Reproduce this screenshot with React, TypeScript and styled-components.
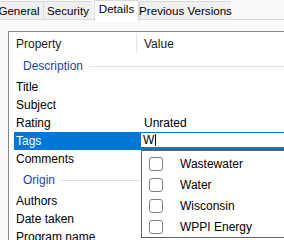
import React from "react";
import styled, { createGlobalStyle } from "styled-components";

const Global = createGlobalStyle`
  html, body { margin: 0; padding: 0; }
  body {
    width: 284px;
    height: 240px;
    overflow: hidden;
    background: #f9f9f9;
    font-family: "Liberation Sans", Arial, sans-serif;
    font-size: 12px;
    color: #000;
  }
`;

const Window = styled.div`
  position: relative;
  width: 284px;
  height: 240px;
  overflow: hidden;
`;

const TabStrip = styled.div`
  display: flex;
  align-items: flex-end;
  height: 19px;
  margin-left: -6px;
  background: #f9f9f9;
`;

const Tab = styled.div<{ $w: number; $active?: boolean }>`
  box-sizing: border-box;
  width: ${(p) => p.$w}px;
  height: ${(p) => (p.$active ? 21 : 18)}px;
  margin-left: ${(p) => (p.$active ? 2 : 0)}px;
  margin-bottom: ${(p) => (p.$active ? -2 : 0)}px;
  align-self: ${(p) => (p.$active ? "flex-start" : "flex-end")};
  display: flex;
  align-items: ${(p) => (p.$active ? "flex-start" : "center")};
  padding-top: ${(p) => (p.$active ? 1 : 0)}px;
  justify-content: center;
  background: ${(p) => (p.$active ? "#ffffff" : "#f0f0f0")};
  border: 1px solid #d9d9d9;
  border-bottom: none;
  border-right-width: ${(p) => (p.$active ? 1 : 0)}px;
  position: relative;
  z-index: ${(p) => (p.$active ? 2 : 1)};
  white-space: nowrap;
  font-size: 11.6px;
`;

const Panel = styled.div`
  position: relative;
  z-index: 1;
  border-top: 1px solid #d9d9d9;
  padding: 11px 0 0 8px;
`;

const ListView = styled.div`
  box-sizing: border-box;
  width: 300px;
  height: 240px;
  background: #ffffff;
  border: 1px solid #828790;
`;

const Header = styled.div`
  display: flex;
  height: 22px;
  align-items: stretch;
`;

const HeaderCell = styled.div<{ $w?: number; $divider?: boolean }>`
  display: flex;
  align-items: center;
  box-sizing: border-box;
  ${(p) => (p.$w ? `width: ${p.$w}px;` : "flex: 1;")}
  padding-left: 7px;
  color: #1a1a1a;
  border-right: ${(p) => (p.$divider ? "1px solid #e5e5e5" : "none")};
  margin: 1px 0 0 0;
`;

const Group = styled.div`
  display: flex;
  align-items: center;
  height: 24px;
  padding-left: 14px;
  color: #1c3fa6;
  gap: 6px;
`;

const GroupLine = styled.div`
  flex: 1;
  height: 1px;
  background: #dbe1ee;
`;

const Row = styled.div<{ $selected?: boolean }>`
  display: flex;
  height: 18px;
  margin-left: 5px;
  background: ${(p) => (p.$selected ? "#0078d7" : "transparent")};
  color: ${(p) => (p.$selected ? "#ffffff" : "#000000")};
`;

const Label = styled.div`
  width: 123px;
  padding-left: 2px;
  box-sizing: border-box;
  display: flex;
  align-items: center;
  white-space: nowrap;
`;

const Value = styled.div`
  flex: 1;
  padding-left: 7px;
  display: flex;
  align-items: center;
  white-space: nowrap;
`;

const EditCell = styled.div`
  flex: 1;
  display: flex;
  padding: 1px 0 3px 4px;
`;

const EditBox = styled.div`
  flex: 1;
  background: #ffffff;
  color: #000;
  display: flex;
  align-items: center;
  padding-left: 2px;
`;

const Caret = styled.span`
  display: inline-block;
  width: 1px;
  height: 12px;
  background: #000;
  margin-left: 1px;
`;

const Dropdown = styled.div`
  position: absolute;
  left: 141px;
  top: 150px;
  width: 160px;
  height: 88px;
  box-sizing: border-box;
  background: #ffffff;
  border: 1px solid #646464;
  padding-top: 2px;
  z-index: 5;
`;

const Option = styled.div`
  display: flex;
  align-items: center;
  height: 21px;
  padding-left: 7px;
  gap: 17px;
  color: #000;
`;

const Check = styled.span`
  box-sizing: border-box;
  width: 14px;
  height: 14px;
  border: 1px solid #808080;
  border-radius: 3px;
  background: #fff;
`;

export default function App() {
  return (
    <Window>
      <Global />
      <TabStrip>
        <Tab $w={49}>General</Tab>
        <Tab $w={49}>Security</Tab>
        <Tab $w={45} $active>Details</Tab>
        <Tab $w={92}>Previous Versions</Tab>
      </TabStrip>
      <Panel>
        <ListView>
          <Header>
            <HeaderCell $w={128} $divider>Property</HeaderCell>
            <HeaderCell>Value</HeaderCell>
          </Header>
          <Group>
            Description
            <GroupLine />
          </Group>
          <Row>
            <Label>Title</Label>
            <Value />
          </Row>
          <Row>
            <Label>Subject</Label>
            <Value />
          </Row>
          <Row>
            <Label>Rating</Label>
            <Value>Unrated</Value>
          </Row>
          <Row $selected>
            <Label>Tags</Label>
            <EditCell>
              <EditBox>
                W<Caret />
              </EditBox>
            </EditCell>
          </Row>
          <Row>
            <Label>Comments</Label>
            <Value />
          </Row>
          <Group>
            Origin
            <GroupLine />
          </Group>
          <Row>
            <Label>Authors</Label>
            <Value />
          </Row>
          <Row>
            <Label>Date taken</Label>
            <Value />
          </Row>
          <Row>
            <Label>Program name</Label>
            <Value />
          </Row>
        </ListView>
      </Panel>
      <Dropdown>
        {["Wastewater", "Water", "Wisconsin", "WPPI Energy"].map((t) => (
          <Option key={t}>
            <Check />
            {t}
          </Option>
        ))}
      </Dropdown>
    </Window>
  );
}
